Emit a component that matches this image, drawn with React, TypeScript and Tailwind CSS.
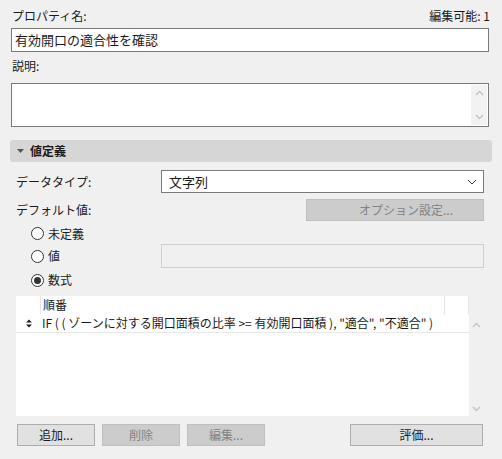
import React from "react";

const font = { fontFamily: '"Noto Sans CJK JP", "Noto Sans", sans-serif' };

function Up({ className }: { className?: string }) {
  return (
    <svg width="9" height="6" viewBox="0 0 9 6" className={className}>
      <path d="M1 5 L4.5 1.5 L8 5" fill="none" stroke="#c4c4c4" strokeWidth="1.4" />
    </svg>
  );
}
function Down({ className }: { className?: string }) {
  return (
    <svg width="9" height="6" viewBox="0 0 9 6" className={className}>
      <path d="M1 1 L4.5 4.5 L8 1" fill="none" stroke="#c4c4c4" strokeWidth="1.4" />
    </svg>
  );
}

function Radio({ label, checked }: { label: string; checked?: boolean }) {
  return (
    <div className="flex items-center gap-[4px]">
      <div className="w-[13px] h-[13px] rounded-full border border-[#333] bg-white flex items-center justify-center">
        {checked && <div className="w-[7px] h-[7px] rounded-full bg-[#333]" />}
      </div>
      <span>{label}</span>
    </div>
  );
}

export default function App() {
  return (
    <div
      className="w-[502px] h-[459px] bg-[#f0f0f0] text-[12px] text-[#1a1a1a] overflow-hidden flex flex-col"
      style={font}
    >
      <div className="px-[11px] pr-[13px] flex flex-col">
        <div className="flex justify-between items-center h-[16px] mt-[8px] pl-[1px]">
          <span>プロパティ名:</span>
          <span className="mr-[-1px]">編集可能: 1</span>
        </div>
        <div className="mt-[4px] h-[24px] bg-white border border-[#7a7a7a] flex items-center px-[3px] text-[13px]">
          有効開口の適合性を確認
        </div>
        <div className="h-[16px] mt-[6px] flex items-center pl-[1px]">説明:</div>
        <div className="mt-[9px] h-[44px] bg-white border border-[#7a7a7a] flex justify-end p-[1px]">
          <div className="w-[16px] bg-[#f2f2f2] flex flex-col items-center justify-between py-[5px]">
            <Up />
            <Down />
          </div>
        </div>
      </div>

      <div className="mx-[10px] mt-[13px] h-[22px] bg-[#d6d6d6] rounded-[3px] flex items-center pl-[7px] gap-[6px] font-bold">
        <svg width="7" height="4" viewBox="0 0 7 4">
          <path d="M0 0 L7 0 L3.5 4 Z" fill="#555" />
        </svg>
        <span>値定義</span>
      </div>

      <div className="pl-[16px] pr-[18px] flex flex-col">
        <div className="mt-[8px] flex items-center">
          <span className="w-[145px]">データタイプ:</span>
          <div className="flex-1 h-[23px] bg-white border border-[#7a7a7a] flex items-center justify-between pl-[7px] pr-[6px] text-[13px]">
            <span>文字列</span>
            <svg width="10" height="6" viewBox="0 0 10 6">
              <path d="M1 1 L5 5 L9 1" fill="none" stroke="#444" strokeWidth="1" />
            </svg>
          </div>
        </div>
        <div className="mt-[6px] flex items-center justify-between">
          <span>デフォルト値:</span>
          <div className="w-[178px] h-[22px] bg-[#cccccc] border border-[#bfbfbf] flex items-center justify-center text-[#838383] pl-[22px]">
            オプション設定...
          </div>
        </div>
        <div className="pl-[15px] mt-[2px] flex flex-col">
          <div className="h-[21px] flex items-center">
            <Radio label="未定義" />
          </div>
          <div className="flex items-center">
            <div className="w-[130px]">
              <Radio label="値" />
            </div>
            <div className="flex-1 h-[24px] border border-[#cfcfcf] bg-[#f0f0f0]" />
          </div>
          <div className="h-[24px] flex items-center">
            <Radio label="数式" checked />
          </div>
        </div>

        <div className="mt-[4px] h-[120px] flex">
          <div className="flex-1 flex flex-col">
            <div className="h-[18px] bg-white flex">
              <div className="w-[25px] border-r border-[#e5e5e5]" />
              <div className="flex-1 pl-[2px] flex items-center border-r border-[#e5e5e5]">順番</div>
              <div className="w-[24px] border-r border-[#e5e5e5]" />
            </div>
            <div className="flex-1 bg-white flex flex-col">
              <div className="h-[19px] flex items-center border-b border-[#e8e8e8] text-[12px]">
                <div className="w-[25px] flex justify-center">
                  <svg width="6" height="9" viewBox="0 0 6 9">
                    <path d="M0 3.5 L3 0.5 L6 3.5 Z M0 5.5 L3 8.5 L6 5.5 Z" fill="#222" />
                  </svg>
                </div>
                <span className="pl-[1px] whitespace-nowrap">
                  IF ( ( ゾーンに対する開口面積の比率 &gt;= 有効開口面積 ), "適合", "不適合" )
                </span>
              </div>
            </div>
          </div>
          <div className="w-[15px] flex flex-col items-center justify-between pt-[26px] pb-[4px]">
            <Up />
            <Down />
          </div>
        </div>
      </div>

      <div className="pl-[17px] pr-[19px] mt-[8px] flex items-center">
        <div className="w-[78px] h-[22px] bg-[#e1e1e1] border border-[#adadad] flex items-center justify-center">
          追加...
        </div>
        <div className="ml-[7px] w-[78px] h-[22px] bg-[#cccccc] border border-[#bfbfbf] flex items-center justify-center text-[#838383]">
          削除
        </div>
        <div className="ml-[7px] w-[78px] h-[22px] bg-[#cccccc] border border-[#bfbfbf] flex items-center justify-center text-[#838383]">
          編集...
        </div>
        <div className="ml-auto w-[133px] h-[22px] bg-[#e1e1e1] border border-[#adadad] flex items-center justify-center">
          評価...
        </div>
      </div>
    </div>
  );
}
